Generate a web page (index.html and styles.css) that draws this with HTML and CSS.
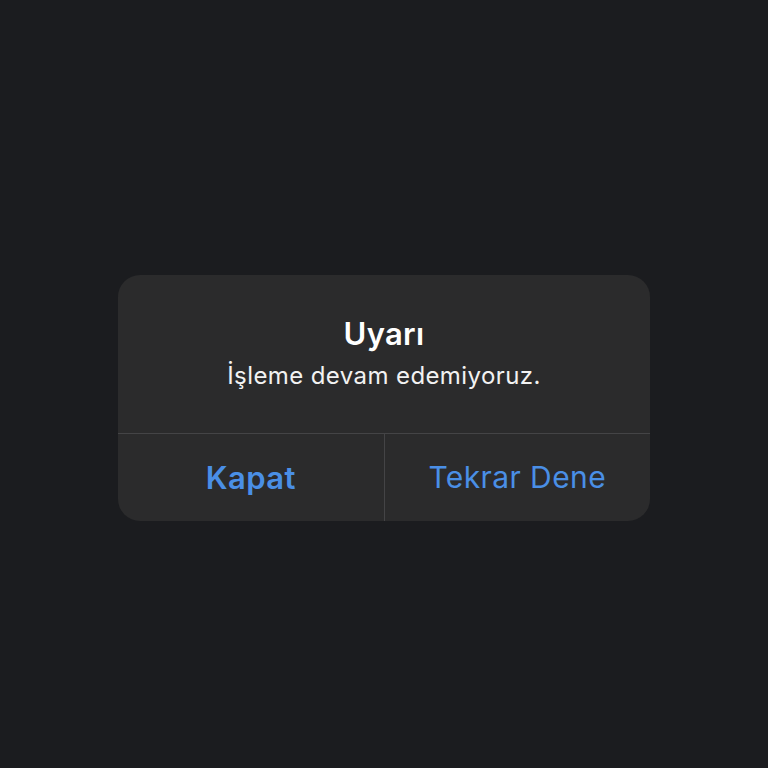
FILE: index.html
```html
<!doctype html>
<html lang="tr">
	<head>
		<meta charset="utf-8">
		<title>Uyarı</title>
		<link rel="stylesheet" href="styles.css">
	</head>
	<body>
		<main class="alert">
			<div class="alert-body">
				<h1>Uyarı</h1>
				<p>İşleme devam edemiyoruz.</p>
			</div>
			<div class="alert-actions">
				<button class="primary">Kapat</button>
				<button>Tekrar Dene</button>
			</div>
		</main>
	</body>
</html>
```

FILE: styles.css
```css
html, body {
	margin: 0;
	width: 100%;
	height: 100%;
}

body {
	font-family: Inter, "Noto Sans", sans-serif;
	background-color: #1b1c1f;
	display: flex;
	justify-content: center;
	align-items: center;
	box-sizing: border-box;
	padding-top: 27px;
}

.alert {
	width: 532px;
	background-color: #2b2b2c;
	border-radius: 22px;
	overflow: hidden;
}

.alert-body {
	height: 158px;
	box-sizing: border-box;
	padding-top: 39px;
	text-align: center;
	color: #fff;
}

.alert-body h1 {
	margin: 0;
	font-size: 31px;
	font-weight: 600;
	line-height: 40px;
	letter-spacing: 0.3px;
}

.alert-body p {
	margin: 2px 0 0;
	font-size: 24px;
	line-height: 40px;
	letter-spacing: 0.4px;
	color: #f2f2f2;
}

.alert-actions {
	display: flex;
	height: 87px;
	border-top: 1px solid #444446;
}

.alert-actions button {
	flex: 1;
	font: inherit;
	font-size: 30px;
	letter-spacing: 0.4px;
	color: #4a8fe6;
	background: none;
	border: none;
	padding: 0;
}

.alert-actions button + button {
	border-left: 1px solid #444446;
}

.alert-actions .primary {
	font-weight: 600;
	font-size: 31px;
}
```
